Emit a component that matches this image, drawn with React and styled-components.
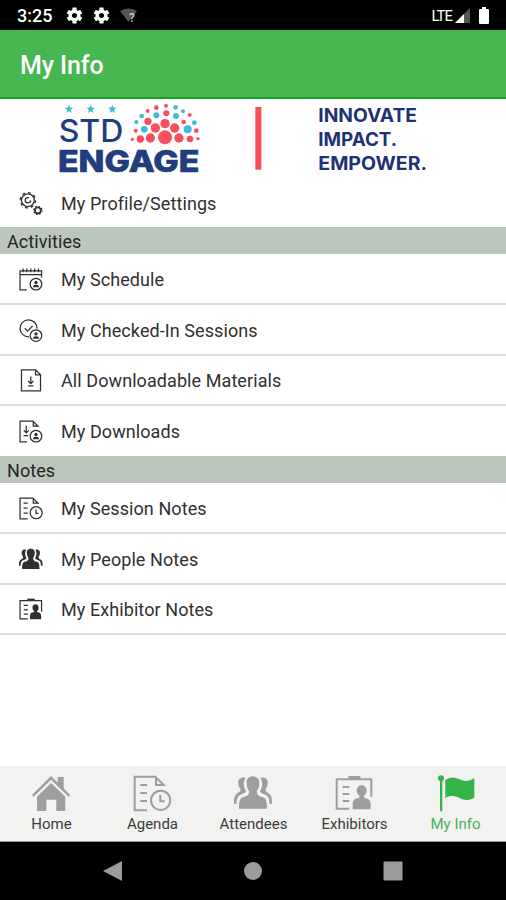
import React from 'react'
import styled, { createGlobalStyle } from 'styled-components'

const GlobalStyle = createGlobalStyle`
    * {
        box-sizing: border-box;
    }
    body {
        margin: 0;
        background: #fff;
        font-family: Roboto, "Liberation Sans", sans-serif;
    }
`;

const range = (n) => Array.from({ length: n }, (_, i) => i)

const DocLines = () => <path d='M22 30H42M22 54H42M22 78H42' />

const AgendaIcon = () => (
    <>
        <path d='M42 106H5V5H67L92 30H69V8' />
        <DocLines />
        <circle cx='83' cy='76' r='29' />
        <path d='M82 60V79H95' />
    </>
)

const PeopleIcon = () => (
    <g fill='currentColor' stroke='none'>
        <path d='M57 4C70 4 78 13 76 27C75 38 71 45 68 49C69 61 76 64 87 67C97 71 99 80 99 101H15C15 80 17 71 27 67C38 64 45 61 46 49C43 45 39 38 38 27C36 13 44 4 57 4Z' />
        <path d='M35 9C21 4 10 13 13 28C14 36 18 40 20 43C19 51 14 53 9 56C2 60 0 68 0 86H8C8 70 11 63 20 59C30 55 35 54 36 49C29 37 26 22 35 9Z' />
        <path d='M79 9C93 4 104 13 101 28C100 36 96 40 94 43C95 51 100 53 105 56C112 60 114 68 114 86H106C106 70 103 63 94 59C84 55 79 54 78 49C85 37 88 22 79 9Z' />
    </g>
)

const ExhibitorIcon = () => (
    <>
        <path d='M43 101H5V13H109V66' />
        <path d='M40 8H76' strokeWidth='10' />
        <path d='M23 36H43M23 57H43M23 78H43' />
        <g fill='currentColor' stroke='none'>
            <ellipse cx='80' cy='47' rx='15' ry='17' />
            <path d='M73 59H87V68C102 71 107 75 107 88V103H53V88C53 75 58 71 73 68Z' />
        </g>
    </>
)

const HomeIcon = () => (
    <g fill='currentColor' stroke='none'>
        <path d='M77 6H95V45L77 28Z' />
        <path d='M57 3L115 60L110 65L57 14L5 65L0 60Z' />
        <path d='M57 24L100 65V108H73V74H43V108H15V65Z' />
    </g>
)

const FlagIcon = () => (
    <g fill='currentColor' stroke='none'>
        <circle cx='15' cy='10' r='9' />
        <rect x='12' y='10' width='7' height='99' rx='3' />
        <path d='M28 15C46 2 60 8 74 14C90 21 101 18 115 10V68C99 76 87 78 72 70C57 61 43 61 28 69Z' />
    </g>
)

const Person = ({ x, y }) => (
    <g transform={`translate(${x} ${y})`}>
        <circle r='28' />
        <circle cy='-8' r='8' fill='currentColor' stroke='none' />
        <path d='M-15 15C-15-1 15-1 15 15Z' fill='currentColor' stroke='none' />
    </g>
)

const ScheduleIcon = () => (
    <>
        <path d='M38 106H5V14H109V46M5 32H109' />
        <path d='M20 3V20M38 3V20M57 3V20M76 3V20M94 3V20' />
        <Person x={82} y={78} />
    </>
)

const CheckInIcon = () => (
    <>
        <path d='M49 86A41 41 0 1 1 87 47' />
        <path d='M28 45L42 59L66 33' />
        <Person x={82} y={80} />
    </>
)

const DownloadIcon = () => (
    <>
        <path d='M12 4H80L104 28V106H12ZM80 4V28H104' />
        <path d='M57 36V70M44 58L57 71L70 58M44 82H70' />
    </>
)

const MyDownloadsIcon = () => (
    <>
        <path d='M39 106H5V5H67L92 30H69V8' />
        <path d='M35 28V61M23 50L35 62L47 50M22 75H44' />
        <Person x={82} y={78} />
    </>
)

const GearsIcon = () => (
    <>
        <circle cx='43' cy='40' r='31' />
        <circle cx='43' cy='40' r='37' strokeDasharray='14 15' />
        <circle cx='43' cy='40' r='13' strokeDasharray='66 15' />
        <circle cx='91' cy='89' r='14' strokeWidth='8' />
        <circle cx='91' cy='89' r='20' strokeDasharray='8 7.7' />
    </>
)

const Icon = ({ shape: Shape, size }) => (
    <IconSvg viewBox='0 0 116 112' $size={size}>
        <Shape />
    </IconSvg>
)

const Gear = () => (
    <StatusSvg viewBox='-12 -12 24 24' width='19' height='19'>
        {range(6).map((i) => (
            <rect key={i} x='-2.7' y='-10' width='5.4' height='6' rx='1' transform={`rotate(${i * 60})`} />
        ))}
        <circle r='5.4' fill='none' stroke='#fff' strokeWidth='4.2' />
    </StatusSvg>
)

const blue = '#42b9d9'
const red = '#f94f5c'

// x, y, radius, color
const dots = [
    [345, 118, 21, red], [301, 120, 14, red], [387, 120, 14, red],
    [271, 123, 11, red], [420, 123, 10, red], [247, 124, 5, red], [444, 122, 5, red],
    [316, 90, 14, red], [345, 77, 14, red], [374, 90, 14, red],
    [283, 94, 10, blue], [413, 94, 12, blue], [257, 98, 6, red], [439, 98, 7, red],
    [294, 70, 11, red], [401, 72, 7, red], [433, 74, 7, blue], [259, 72, 6, blue],
    [319, 52, 9, blue], [349, 46, 9, red], [378, 54, 9, blue],
    [275, 54, 7, blue], [293, 39, 6, red], [319, 29, 7, red],
    [348, 23, 6, red], [377, 28, 7, blue], [399, 40, 6, blue], [419, 51, 6, red],
]

const Banner = () => (
    <BannerSvg viewBox='-150 0 1518 246'>
        {[57, 122, 187].map((x) => (
            <path key={x} transform={`translate(${x} 33)`} fill={blue}
                d='M0-13L3.5-4.5L13-4L5.5 2L8 12L0 6.5L-8 12L-5.5 2L-13-4L-3.5-4.5Z' />
        ))}
        <text x='26' y='132' fontSize='92' fontWeight='500' textLength='194' lengthAdjust='spacingAndGlyphs'>STD</text>
        <text x='24' y='223' fontSize='89' fontWeight='800' textLength='424' lengthAdjust='spacingAndGlyphs'
            stroke='#203d7d' strokeWidth='2'>ENGAGE</text>
        {dots.map(([x, y, r, color]) => (
            <circle key={`${x}-${y}`} cx={x} cy={y} r={r} fill={color} />
        ))}
        <rect x='616' y='27' width='18' height='188' fill='#fb4d57' />
        <g fontSize='55' fontWeight='700' fill='#1f3278'>
            <text x='805' y='71' textLength='296' lengthAdjust='spacingAndGlyphs'>INNOVATE</text>
            <text x='805' y='144' textLength='236' lengthAdjust='spacingAndGlyphs'>IMPACT.</text>
            <text x='805' y='217' textLength='326' lengthAdjust='spacingAndGlyphs'>EMPOWER.</text>
        </g>
    </BannerSvg>
)

const activities = [
    { title: 'My Schedule', icon: ScheduleIcon },
    { title: 'My Checked-In Sessions', icon: CheckInIcon },
    { title: 'All Downloadable Materials', icon: DownloadIcon },
    { title: 'My Downloads', icon: MyDownloadsIcon, height: 50, plain: true },
]

const notes = [
    { title: 'My Session Notes', icon: AgendaIcon },
    { title: 'My People Notes', icon: PeopleIcon },
    { title: 'My Exhibitor Notes', icon: ExhibitorIcon },
]

const tabs = [
    { title: 'Home', icon: HomeIcon },
    { title: 'Agenda', icon: AgendaIcon },
    { title: 'Attendees', icon: PeopleIcon },
    { title: 'Exhibitors', icon: ExhibitorIcon },
    { title: 'My Info', icon: FlagIcon, active: true },
]

const MenuRow = ({ title, icon, height = 50.67, plain }) => (
    <Row $height={height} $plain={plain}>
        <Icon shape={icon} size={24} />
        <span>{title}</span>
    </Row>
)

const App = () => {
    return (
        <Screen>
            <GlobalStyle />
            <StatusBar>
                <Clock>3:25</Clock>
                <StatusIcons>
                    <Gear />
                    <Gear />
                    <StatusSvg viewBox='0 0 20 18' width='20' height='18'>
                        <path d='M1 4Q9-1 18 4L9.500 15Z' fill='#555' />
                        <text x='10' y='14.500' fontSize='12' fontWeight='500' fill='#ccc'>?</text>
                    </StatusSvg>
                </StatusIcons>
                <Network>LTE</Network>
                <StatusSvg viewBox='0 0 16 16' width='16' height='16'>
                    <path d='M0 15L15 0V15Z' fill='#555' />
                    <path d='M0 15L9 6V15Z' />
                </StatusSvg>
                <Battery viewBox='0 0 10 17' width='10' height='17'>
                    <path d='M3 0H7V2H9Q10 2 10 3V16Q10 17 9 17H1Q0 17 0 16V3Q0 2 1 2H3Z' />
                </Battery>
            </StatusBar>
            <Header>My Info</Header>
            <Content>
                <Banner />
                <MenuRow title='My Profile/Settings' icon={GearsIcon} height={47.3} plain />
                <SectionTitle>Activities</SectionTitle>
                {activities.map((item) => <MenuRow key={item.title} {...item} />)}
                <SectionTitle>Notes</SectionTitle>
                {notes.map((item) => <MenuRow key={item.title} {...item} />)}
            </Content>
            <TabBar>
                {tabs.map(({ title, icon, active }) => (
                    <Tab key={title} $active={active}>
                        <Icon shape={icon} size={38.67} />
                        <TabLabel $active={active}>{title}</TabLabel>
                    </Tab>
                ))}
            </TabBar>
            <NavBar>
                <svg width='20' height='22'><path d='M0 11L19 1V21Z' /></svg>
                <svg width='20' height='22'><circle cx='10' cy='11' r='9' /></svg>
                <svg width='20' height='22'><rect x='.5' y='1.500' width='19' height='19' rx='1' /></svg>
            </NavBar>
        </Screen>
    )
}

const Screen = styled.div`
    width: 506px;
    height: 900px;
    display: flex;
    flex-direction: column;
    overflow: hidden;
    background: #fff;
`;

const StatusBar = styled.div`
    height: 30px;
    padding: 1px 17px 0 17px;
    display: flex;
    align-items: center;
    background: #000;
    color: #fff;
`;

const Clock = styled.span`
    width: 48px;
    font-size: 18px;
    font-weight: 500;
`;

const StatusIcons = styled.div`
    flex: 1;
    display: flex;
    align-items: center;
    gap: 8px;
`;

const StatusSvg = styled.svg`
    display: block;
    fill: #fff;
`;

const Network = styled.span`
    margin-right: 3px;
    font-size: 15px;
    letter-spacing: -1px;
`;

const Battery = styled(StatusSvg)`
    margin-left: 8px;
`;

const Header = styled.div`
    height: 69px;
    padding: 4px 0 0 20px;
    display: flex;
    align-items: center;
    background: #45b650;
    border-bottom: 2px solid #16a326;
    color: #fff;
    font-size: 25px;
    font-weight: 500;
    letter-spacing: -0.1px;
`;

const Content = styled.div`
    flex: 1;
`;

const BannerSvg = styled.svg`
    display: block;
    width: 506px;
    height: 82px;
    margin-top: -1px;
    fill: #203d7d;
    font-family: Inter, sans-serif;
`;

const Row = styled.div`
    height: ${({ $height }) => $height}px;
    padding: ${({ $plain }) => ($plain ? 0 : 2)}px 0 0 19px;
    display: flex;
    align-items: center;
    gap: 18px;
    border-bottom: ${({ $plain }) => ($plain ? 0 : 2)}px solid #dcdcdc;
    color: #303030;
    font-size: 18px;
    letter-spacing: 0.08px;
`;

const IconSvg = styled.svg`
    display: block;
    flex: none;
    width: ${({ $size }) => $size}px;
    height: ${({ $size }) => ($size * 112) / 116}px;
    fill: none;
    stroke: currentColor;
    stroke-width: 6;
`;

const SectionTitle = styled.div`
    height: 27px;
    padding-left: 7px;
    background: #bbc6bc;
    color: #252525;
    font-size: 18px;
    line-height: 29px;
    letter-spacing: 0.08px;
`;

const TabBar = styled.div`
    height: 76px;
    padding-left: 1px;
    display: grid;
    grid-template-columns: repeat(5, 1fr);
    background: #f2f2f0;
    border-bottom: 1px solid #999;
`;

const Tab = styled.div`
    padding-top: 9px;
    display: flex;
    flex-direction: column;
    align-items: center;
    color: ${({ $active }) => ($active ? '#36b449' : '#9e9e9e')};
`;

const TabLabel = styled.span`
    margin-top: 3px;
    color: ${({ $active }) => ($active ? '#4caf5b' : '#3c3c3c')};
    font-size: 15px;
    line-height: 18px;
`;

const NavBar = styled.div`
    height: 58px;
    padding: 0 103px;
    display: flex;
    align-items: center;
    justify-content: space-between;
    background: #000;
    fill: #9b9b9b;
`;

export default App
